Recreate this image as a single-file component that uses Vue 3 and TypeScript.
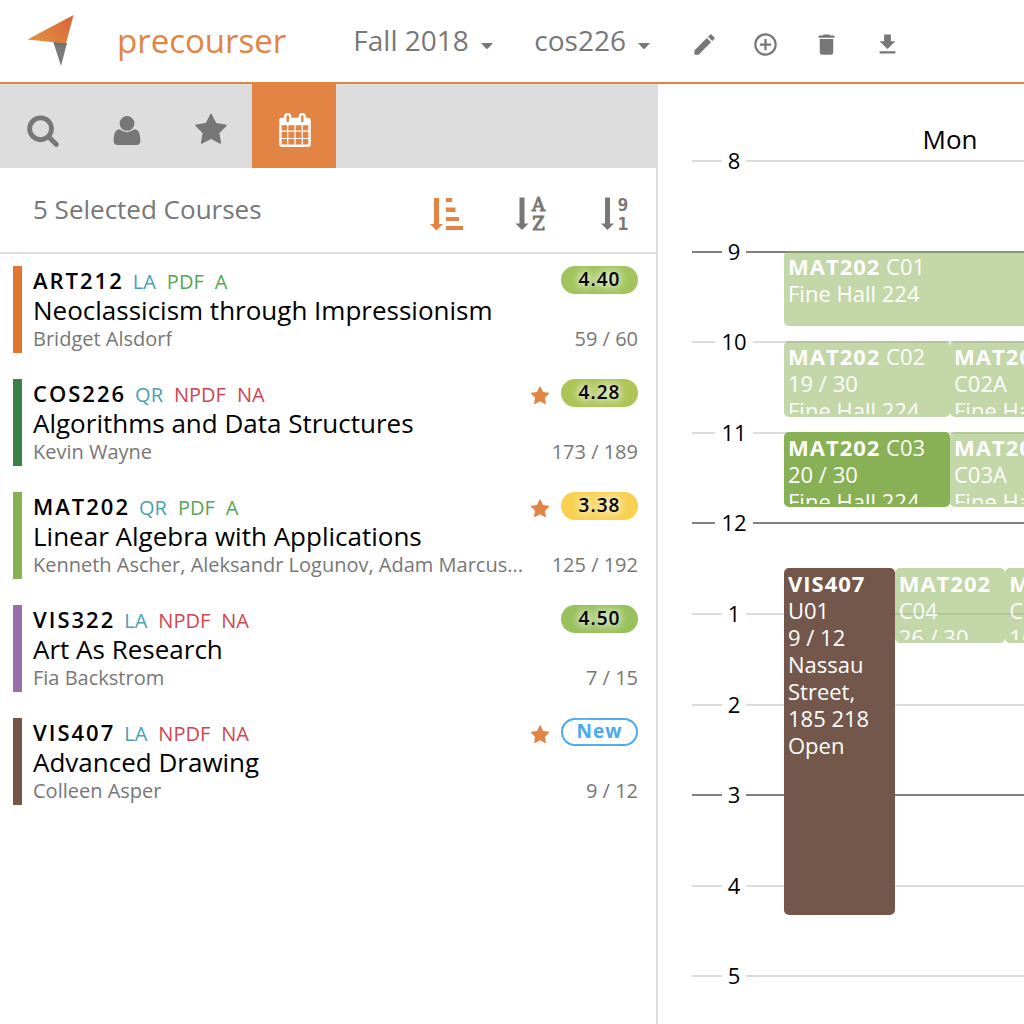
<script setup lang="ts">
import { ref } from 'vue'

type Tag = { text: string; tone: 'area' | 'yes' | 'no' }
type Course = {
  code: string
  title: string
  people: string
  seats: string
  color: string
  tags: Tag[]
  starred: boolean
  score: string
  scoreColor?: string
}
type CalendarEvent = {
  course: string
  section: string
  lines: string[]
  start: number
  minutes: number
  lane: number
  lanes: number
  color: string
  preview: boolean
}

const FIRST_HOUR = 8
const HOURS_SHOWN = 10

const area = (text: string): Tag => ({ text, tone: 'area' })
const yes = (text: string): Tag => ({ text, tone: 'yes' })
const no = (text: string): Tag => ({ text, tone: 'no' })

const courses: Course[] = [
  { code: 'ART212', title: 'Neoclassicism through Impressionism', people: 'Bridget Alsdorf', seats: '59 / 60', color: '#e2762f', tags: [area('LA'), yes('PDF'), yes('A')], starred: false, score: '4.40', scoreColor: '#a1c55c' },
  { code: 'COS226', title: 'Algorithms and Data Structures', people: 'Kevin Wayne', seats: '173 / 189', color: '#3b804a', tags: [area('QR'), no('NPDF'), no('NA')], starred: true, score: '4.28', scoreColor: '#adc557' },
  { code: 'MAT202', title: 'Linear Algebra with Applications', people: 'Kenneth Ascher, Aleksandr Logunov, Adam Marcus...', seats: '125 / 192', color: '#88b054', tags: [area('QR'), yes('PDF'), yes('A')], starred: true, score: '3.38', scoreColor: '#f8d150' },
  { code: 'VIS322', title: 'Art As Research', people: 'Fia Backstrom', seats: '7 / 15', color: '#966fab', tags: [area('LA'), no('NPDF'), no('NA')], starred: false, score: '4.50', scoreColor: '#98c15c' },
  { code: 'VIS407', title: 'Advanced Drawing', people: 'Colleen Asper', seats: '9 / 12', color: '#73574b', tags: [area('LA'), no('NPDF'), no('NA')], starred: true, score: 'New' },
]

const GREEN = '#88b054'
const BROWN = '#73574b'

const events: CalendarEvent[] = [
  { course: 'MAT202', section: 'C01', lines: ['Fine Hall 224'], start: 9, minutes: 50, lane: 0, lanes: 1, color: GREEN, preview: true },
  { course: 'MAT202', section: 'C02', lines: ['19 / 30', 'Fine Hall 224'], start: 10, minutes: 50, lane: 0, lanes: 2, color: GREEN, preview: true },
  { course: 'MAT202', section: 'C02A', lines: ['Fine Hall 224'], start: 10, minutes: 50, lane: 1, lanes: 2, color: GREEN, preview: true },
  { course: 'MAT202', section: 'C03', lines: ['20 / 30', 'Fine Hall 224'], start: 11, minutes: 50, lane: 0, lanes: 2, color: GREEN, preview: false },
  { course: 'MAT202', section: 'C03A', lines: ['Fine Hall 224'], start: 11, minutes: 50, lane: 1, lanes: 2, color: GREEN, preview: true },
  { course: 'VIS407', section: 'U01', lines: ['9 / 12', 'Nassau Street, 185 218', 'Open'], start: 12.5, minutes: 230, lane: 0, lanes: 3, color: BROWN, preview: false },
  { course: 'MAT202', section: 'C04', lines: ['26 / 30'], start: 12.5, minutes: 50, lane: 1, lanes: 3, color: GREEN, preview: true },
  { course: 'MAT202', section: 'C05', lines: ['16 / 30'], start: 12.5, minutes: 50, lane: 2, lanes: 3, color: GREEN, preview: true },
]

const hours = Array.from({ length: HOURS_SHOWN }, (_, i) => FIRST_HOUR + i)
const hourLabel = (h: number) => (h > 12 ? h - 12 : h)

const eventStyle = (e: CalendarEvent) => ({
  top: `${((e.start - FIRST_HOUR) / HOURS_SHOWN) * 100}%`,
  height: `${(e.minutes / 60 / HOURS_SHOWN) * 100}%`,
  left: `${(e.lane / e.lanes) * 100}%`,
  width: `${100 / e.lanes}%`,
  backgroundColor: e.color,
})

const starPath =
  'M1728 647q0 22-26 48l-363 354 86 500q1 7 1 20 0 21-10.5 35.5t-30.5 14.5q-19 0-40-12l-449-236-449 236q-22 12-40 12-21 0-31.5-14.5t-10.5-35.5q0-6 2-20l86-500-364-354q-25-27-25-48 0-37 56-46l502-73 225-455q19-41 49-41t49 41l225 455 502 73q56 9 56 46z'

const tabs = [
  { name: 'Search', path: 'M1216 832q0-185-131.5-316.5t-316.5-131.5-316.5 131.5-131.5 316.5 131.5 316.5 316.5 131.5 316.5-131.5 131.5-316.5zm512 832q0 52-38 90t-90 38q-54 0-90-38l-343-342q-179 124-399 124-143 0-273.5-55.5t-225-150-150-225-55.5-273.5 55.5-273.5 150-225 225-150 273.5-55.5 273.5 55.5 225 150 150 225 55.5 273.5q0 220-124 399l343 343q37 37 37 90z' },
  { name: 'Profile', path: 'M896 160a390 390 0 1 1 0 780a390 390 0 1 1 0-780zM520 852Q680 1010 896 1010T1272 852C1500 852 1600 1090 1600 1450Q1600 1690 1390 1690H402Q192 1690 192 1450C192 1090 292 852 520 852z' },
  { name: 'Starred', path: starPath },
  { name: 'Calendar', path: 'M192 1664h288v-288h-288v288zm352 0h320v-288h-320v288zm-352-352h288v-320h-288v320zm352 0h320v-320h-320v320zm-352-384h288v-288h-288v288zm736 736h320v-288h-320v288zm-384-736h320v-288h-320v288zm768 736h288v-288h-288v288zm-384-352h320v-320h-320v320zm-352-864v-288q0-13-9.5-22.5t-22.5-9.5h-64q-13 0-22.5 9.5t-9.5 22.5v288q0 13 9.5 22.5t22.5 9.5h64q13 0 22.5-9.5t9.5-22.5zm736 864h288v-320h-288v320zm-384-384h320v-288h-320v288zm384 0h288v-288h-288v288zm32-480v-288q0-13-9.5-22.5t-22.5-9.5h-64q-13 0-22.5 9.5t-9.5 22.5v288q0 13 9.5 22.5t22.5 9.5h64q13 0 22.5-9.5t9.5-22.5zm384-64v1280q0 52-38 90t-90 38h-1408q-52 0-90-38t-38-90v-1280q0-52 38-90t90-38h128v-96q0-66 47-113t113-47h64q66 0 113 47t47 113v96h384v-96q0-66 47-113t113-47h64q66 0 113 47t47 113v96h128q52 0 90 38t38 90z' },
]
const activeTab = ref('Calendar')

const tools = [
  { name: 'Rename', path: 'M3 17.25V21h3.75L17.81 9.94l-3.75-3.75L3 17.25zM20.71 7.04c.39-.39.39-1.02 0-1.41l-2.34-2.34c-.39-.39-1.02-.39-1.41 0l-1.83 1.83 3.75 3.75 1.83-1.83z' },
  { name: 'Add', path: 'M13 7h-2v4H7v2h4v4h2v-4h4v-2h-4V7zm-1-5C6.48 2 2 6.48 2 12s4.48 10 10 10 10-4.48 10-10S17.52 2 12 2zm0 18c-4.41 0-8-3.59-8-8s3.59-8 8-8 8 3.59 8 8-3.59 8-8 8z' },
  { name: 'Delete', path: 'M6 19c0 1.1.9 2 2 2h8c1.1 0 2-.9 2-2V7H6v12zM19 4h-3.500l-1-1h-5l-1 1H5v2h14V4z' },
  { name: 'Download', path: 'M19 9h-4V3H9v6H5l7 7 7-7zM5 18v2h14v-2H5z' },
]

const semester = ref('Fall 2018')
const schedule = ref('cos226')
const sortBy = ref('rating')
</script>

<template>
  <div class="app">
    <header class="topbar">
      <a class="brand" href="#">
        <svg class="logo" viewBox="0 0 48 52" aria-hidden="true">
          <defs>
            <linearGradient id="wing" x1="1" y1="0" x2="0.1" y2="0.7">
              <stop offset="0" stop-color="#d9603a" />
              <stop offset="1" stop-color="#e08c3e" />
            </linearGradient>
            <linearGradient id="tail" x1="0" y1="0" x2="0" y2="1">
              <stop offset="0" stop-color="#666" />
              <stop offset="0.3" stop-color="#7a7a7a" />
            </linearGradient>
          </defs>
          <path d="M26 26L40 28L34 51z" fill="url(#tail)" />
          <path d="M0.500 24.500L46.500 0L39 28.500z" fill="url(#wing)" />
        </svg>
        <span>precourser</span>
      </a>
      <div class="picker">
        <select v-model="semester" aria-label="Semester">
          <option>Fall 2018</option>
        </select>
        <svg viewBox="0 0 12 6" aria-hidden="true"><path d="M0 0H12L7 5.500Q6 6.300 5 5.500z" /></svg>
      </div>
      <div class="picker">
        <select v-model="schedule" aria-label="Schedule">
          <option>cos226</option>
        </select>
        <svg viewBox="0 0 12 6" aria-hidden="true"><path d="M0 0H12L7 5.500Q6 6.300 5 5.500z" /></svg>
      </div>
      <div class="tools">
        <button v-for="tool in tools" :key="tool.name" type="button" :aria-label="tool.name">
          <svg viewBox="0 0 24 24" aria-hidden="true"><path :d="tool.path" /></svg>
        </button>
      </div>
    </header>

    <div class="body">
      <aside class="side">
        <nav class="tabs">
          <button
            v-for="tab in tabs"
            :key="tab.name"
            type="button"
            :aria-label="tab.name"
            :class="{ active: tab.name === activeTab }"
            @click="activeTab = tab.name"
          >
            <svg viewBox="0 0 1792 1792" aria-hidden="true"><path :d="tab.path" /></svg>
          </button>
        </nav>

        <div class="summary">
          <h2>5 Selected Courses</h2>
          <button type="button" aria-label="Sort by rating" :class="{ active: sortBy === 'rating' }" @click="sortBy = 'rating'">
            <svg viewBox="0 0 34 34" aria-hidden="true">
              <path d="M4 1h5v26h4l-6.500 6.500L0 27h4zM16 1h6v4h-6zM16 10.500h9.500v4.500H16zM16 20h13v4H16zM16 29h17v4H16z" />
            </svg>
          </button>
          <button type="button" aria-label="Sort by name" :class="{ active: sortBy === 'name' }" @click="sortBy = 'name'">
            <svg viewBox="0 0 34 34" aria-hidden="true">
              <path d="M5.500 0.500h5v26h4l-6.500 6.500L1.500 26.500h4z" />
              <text class="slab" x="24.500" y="14">A</text>
              <text class="slab" x="24.500" y="33">Z</text>
            </svg>
          </button>
          <button type="button" aria-label="Sort by number" :class="{ active: sortBy === 'number' }" @click="sortBy = 'number'">
            <svg viewBox="0 0 34 34" aria-hidden="true">
              <path d="M7 0.500h5v26h4l-6.500 6.500L3 26.500h4z" />
              <text class="digit" x="25" y="14">9</text>
              <text class="digit" x="25" y="33">1</text>
            </svg>
          </button>
        </div>

        <ul class="courses">
          <li v-for="course in courses" :key="course.code" :style="{ borderLeftColor: course.color }">
            <div class="line meta">
              <strong>{{ course.code }}</strong>
              <div class="tags">
                <span v-for="tag in course.tags" :key="tag.text" :class="tag.tone">{{ tag.text }}</span>
              </div>
              <div class="rating">
                <svg v-if="course.starred" class="star" viewBox="0 0 1792 1792" aria-label="Starred"><path :d="starPath" /></svg>
                <span class="badge" :class="{ fresh: !course.scoreColor }" :style="{ backgroundColor: course.scoreColor }">{{ course.score }}</span>
              </div>
            </div>
            <div class="title">{{ course.title }}</div>
            <div class="line people">
              <span class="names">{{ course.people }}</span>
              <span>{{ course.seats }}</span>
            </div>
          </li>
        </ul>
      </aside>

      <main class="calendar">
        <div class="dayname">Mon</div>
        <div class="grid">
          <div v-for="hour in hours" :key="hour" class="hour" :class="{ major: hour % 3 === 0 }">
            <div class="slot"><span>{{ hourLabel(hour) }}</span></div>
          </div>
          <div class="day">
            <div
              v-for="event in events"
              :key="event.section"
              class="event"
              :class="{ preview: event.preview }"
              :style="eventStyle(event)"
            >
              <div class="content">
                <div><b>{{ event.course }}</b> {{ event.section }}</div>
                <div v-for="text in event.lines" :key="text">{{ text }}</div>
              </div>
            </div>
          </div>
        </div>
      </main>
    </div>
  </div>
</template>

<style>
body {
  margin: 0;
  background: #fff;
}
</style>

<style scoped>
.app {
  display: flex;
  flex-direction: column;
  height: 100vh;
  overflow: hidden;
  font-family: 'Open Sans', 'Noto Sans', sans-serif;
  color: #000;
}

button {
  display: flex;
  align-items: center;
  justify-content: center;
  padding: 0;
  border: 0;
  background: none;
  color: #777;
  cursor: pointer;
}

svg {
  display: block;
  overflow: visible;
  fill: currentColor;
}

.topbar {
  display: flex;
  flex: none;
  align-items: center;
  box-sizing: border-box;
  height: 84px;
  padding-left: 27px;
  border-bottom: 2px solid #e28443;
}

.brand {
  display: flex;
  align-items: center;
  gap: 42px;
  margin-right: 67px;
  color: #e28443;
  font-size: 33px;
  line-height: 44px;
  text-decoration: none;
}

.logo {
  width: 48px;
  height: 52px;
}

.picker {
  display: flex;
  align-items: center;
  gap: 12px;
  margin-right: 41px;
  padding-bottom: 2px;
  color: #777;
}

.picker select {
  appearance: none;
  padding: 0;
  border: 0;
  background: none;
  color: inherit;
  font: 28px/40px 'Open Sans', 'Noto Sans', sans-serif;
}

.picker svg {
  width: 12px;
  height: 6px;
  margin-top: 12px;
}

.tools {
  display: flex;
  gap: 34px;
  padding-top: 6px;
}

.tools svg {
  width: 27px;
  height: 27px;
}

.body {
  display: flex;
  flex: 1;
  min-height: 0;
}

.side {
  flex: none;
  box-sizing: border-box;
  width: 658px;
  border-right: 2px solid #ddd;
}

.tabs {
  display: flex;
  background: #ddd;
}

.tabs button,
.summary button {
  box-sizing: border-box;
  width: 84px;
  height: 84px;
  padding: 8px 0 0 2px;
}

.tabs button.active {
  background: #e28443;
  color: #fff;
}

.tabs svg,
.summary svg {
  width: 34px;
  height: 34px;
}

.summary {
  display: flex;
  align-items: center;
  height: 84px;
  padding-left: 33px;
  border-bottom: 2px solid #ddd;
}

.summary h2 {
  flex: 1;
  margin: 0;
  padding-bottom: 2px;
  color: #777;
  font-size: 26px;
  font-weight: 400;
  line-height: 36px;
}

.summary button.active {
  color: #e28443;
}

.summary text {
  font-size: 18px;
  text-anchor: middle;
}

.slab {
  font-family: 'DejaVu Serif', serif;
  stroke: currentColor;
  stroke-width: 1;
}

.digit {
  font-family: 'DejaVu Sans Mono', monospace;
  font-weight: 700;
}

.courses {
  display: flex;
  flex-direction: column;
  gap: 26px;
  margin: 0;
  padding: 12px 18px 0 13px;
  list-style: none;
}

.courses li {
  padding-left: 11px;
  border-left: 9px solid;
}

.line {
  display: flex;
  align-items: baseline;
}

.meta {
  gap: 9px;
  height: 29px;
  font-size: 20px;
  line-height: 29px;
}

.meta strong {
  font-size: 22px;
  font-weight: 600;
  letter-spacing: 2px;
}

.tags {
  display: flex;
  gap: 11px;
}

.area {
  color: #4a9fb5;
}

.yes {
  color: #56a556;
}

.no {
  color: #d04550;
}

.rating {
  display: flex;
  align-items: center;
  align-self: flex-start;
  gap: 11px;
  margin-left: auto;
}

.star {
  width: 20px;
  height: 20px;
  margin-top: 6px;
  color: #e28443;
}

.badge {
  box-sizing: border-box;
  width: 77px;
  height: 28px;
  border-radius: 14px;
  font-size: 19px;
  font-weight: 600;
  letter-spacing: 1px;
  line-height: 27px;
  text-align: center;
  text-shadow: 0 0 10px #fff, 0 0 10px #fff;
}

.badge.fresh {
  border: 2px solid #4aa9f0;
  color: #4aa9f0;
  font-weight: 700;
  line-height: 23px;
}

.title {
  font-size: 26px;
  line-height: 30px;
  white-space: nowrap;
}

.people {
  justify-content: space-between;
  gap: 24px;
  color: #777;
  font-size: 20px;
  line-height: 28px;
  white-space: nowrap;
}

.names {
  overflow: hidden;
  text-overflow: ellipsis;
}

.calendar {
  flex: 1;
  min-width: 0;
  overflow: hidden;
  padding-left: 34px;
}

.dayname {
  width: 332px;
  padding: 37px 0 3px 92px;
  font-size: 26px;
  line-height: 36px;
  text-align: center;
}

.grid {
  position: relative;
  display: flex;
  flex-direction: column;
  height: 906px;
}

.hour {
  flex: 1;
  border-top: 2px solid #ddd;
}

.hour.major {
  border-color: #808080;
}

.slot {
  width: 84px;
  margin-top: -17px;
  font-size: 22px;
  line-height: 30px;
  text-align: center;
}

.slot span {
  display: inline-block;
  padding: 0 6px;
  background: #fff;
}

.day {
  position: absolute;
  top: 0;
  bottom: 0;
  left: 92px;
  width: 332px;
}

.event {
  position: absolute;
  box-sizing: border-box;
  padding: 2px 12px 3px 4px;
  border-radius: 5px;
  color: #fff;
  font-size: 22px;
  line-height: 27px;
}

.event.preview {
  opacity: 0.5;
}

.content {
  height: 100%;
  overflow: hidden;
}

.content b {
  font-weight: 700;
  letter-spacing: 1px;
}
</style>
